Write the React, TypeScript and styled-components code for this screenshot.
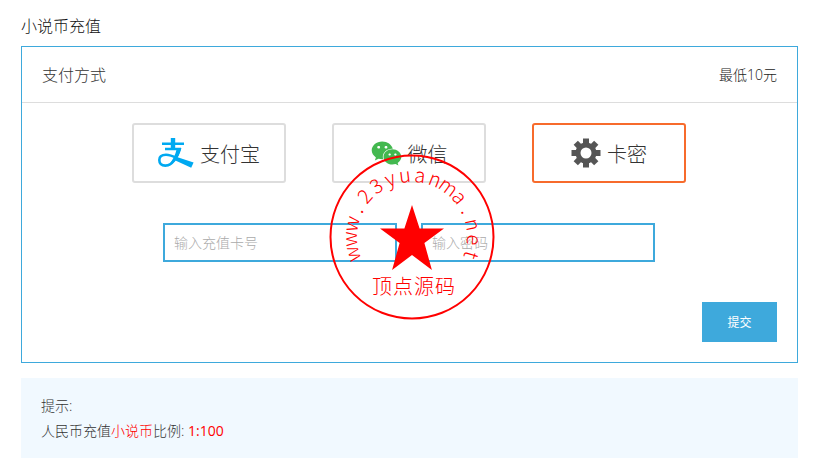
import React from "react";
import styled, { createGlobalStyle } from "styled-components";
import { FaWeixin } from "react-icons/fa";

const GlobalStyle = createGlobalStyle`
  *, *::before, *::after { box-sizing: border-box; }
  body {
    margin: 0;
    background: #fff;
    color: #555;
    font-family: "Open Sans", "Noto Sans CJK SC", sans-serif;
    font-size: 14px;
  }
  button, input { font-family: inherit; }
`;

const Page = styled.main`
  padding: 14px 29px 18px 21px;
`;

const Title = styled.h1`
  margin: 0 0 8px;
  color: #111;
  font-size: 16px;
  font-weight: 300;
  line-height: 24px;
`;

const Panel = styled.form`
  position: relative;
  border: 1px solid #3ea9dc;
`;

const PanelHeader = styled.header`
  display: flex;
  align-items: center;
  justify-content: space-between;
  height: 56px;
  padding: 0 20px;
  border-bottom: 1px solid #ddd;
  line-height: 24px;
`;

const PanelTitle = styled.h2`
  margin: 0;
  color: #333;
  font-size: 16px;
  font-weight: 300;
`;

const Minimum = styled.span`
  color: #222;
  font-weight: 300;
`;

const Methods = styled.div`
  display: flex;
  justify-content: center;
  gap: 46px;
  padding: 20px 21px 40px 20px;
`;

const Method = styled.button<{ $active?: boolean }>`
  display: flex;
  align-items: center;
  justify-content: center;
  gap: 6px;
  width: 154px;
  height: 60px;
  padding: 0;
  border: 2px solid ${(p) => (p.$active ? "#f76b2c" : "#ddd")};
  border-radius: 3px;
  background: #fff;
  color: #333;
  font-size: 20px;
  font-weight: 300;
  cursor: pointer;
`;

const Fields = styled.div`
  display: flex;
  justify-content: center;
  gap: 24px;
  padding: 0 21px 0 20px;
`;

const Field = styled.input`
  width: 234px;
  height: 39px;
  padding: 0 9px;
  border: 2px solid #3ea9dc;
  border-radius: 0;
  background: #fff;
  color: #555;
  font-size: 14px;
  font-weight: 300;
  &::placeholder { color: #aaa; opacity: 1; }
`;

const Actions = styled.div`
  display: flex;
  justify-content: flex-end;
  padding: 40px 20px 20px;
`;

const Submit = styled.button`
  width: 75px;
  height: 40px;
  padding: 0;
  border: 0;
  background: #3ea9dc;
  color: #fff;
  font-size: 12px;
  font-weight: 400;
  cursor: pointer;
`;

const Hint = styled.aside`
  margin-top: 15px;
  padding: 15px 20px;
  background: #f1f9ff;
  color: #333;
  font-weight: 300;
  line-height: 25px;
  p { margin: 0; }
  em { color: #f00; font-style: normal; }
`;

const Ratio = styled.em`
  font-weight: 400;
`;

const Stamp = styled.svg`
  position: absolute;
  top: 106px;
  left: 50%;
  margin-left: -82px;
  pointer-events: none;
  fill: #f00;
  font-family: "Liberation Sans Narrow", "Noto Sans CJK SC", sans-serif;
  font-weight: 300;
`;

const AlipayIcon = () => (
  <svg width="36" height="30" viewBox="0 0 36 30" fill="#00a9f1" aria-hidden="true">
    <path d="M12.8 0h4.4v12h-4.4zM4 4.4h22v2.6H4zM7 9.8h16v2.4H7z" />
    <path
      d="M21.3 11C19.5 19.5 14 27.6 7.4 27.6C3.2 27.6 1.3 25.2 1.3 22C1.3 18.6 4 16.8 8 16.8C12 16.8 15 18.2 19 20.2"
      fill="none"
      stroke="#00a9f1"
      strokeWidth="2.6"
    />
    <path d="M18.8 10H23.4C22.6 14 21.2 17 19.6 19.2L35.6 24.6L33.2 29.8L17.4 22.6C15.4 25 12.8 27.4 9.4 28.8C13.6 24 17.8 17 18.8 10Z" />
  </svg>
);

const GearIcon = () => (
  <svg width="30" height="30" viewBox="0 0 30 30" aria-hidden="true">
    <circle cx="15" cy="15" r="8" fill="none" stroke="#555" strokeWidth="5" />
    {[0, 45, 90, 135, 180, 225, 270, 315].map((angle) => (
      <path key={angle} d="M12 0.5h6v5h-6z" fill="#555" transform={`rotate(${angle} 15 15)`} />
    ))}
  </svg>
);

const SITE = "www.23yuanma.net";

const SourceStamp = () => (
  <Stamp width="168" height="168" viewBox="-84 -84 168 168" role="img" aria-label="www.23yuanma.net 顶点源码">
    <circle r="81.5" fill="none" stroke="#f00" strokeWidth="2" />
    <path d="M0 -32L7.6 -8.5H32L12.4 6L19.9 33L0 18L-19.9 33L-12.4 6L-32 -8.5H-7.6Z" />
    {SITE.split("").map((letter, i) => (
      <text key={i} y="-55" fontSize="20" textAnchor="middle" transform={`rotate(${-106 + i * 14.2})`}>
        {letter}
      </text>
    ))}
    {"顶点源码".split("").map((letter, i) => (
      <text key={letter} x={-30 + i * 21} y="57" fontSize="20" textAnchor="middle">
        {letter}
      </text>
    ))}
  </Stamp>
);

export default function App() {
  return (
    <>
      <GlobalStyle />
      <Page>
        <Title>小说币充值</Title>
        <Panel onSubmit={(e) => e.preventDefault()}>
          <PanelHeader>
            <PanelTitle>支付方式</PanelTitle>
            <Minimum>最低10元</Minimum>
          </PanelHeader>
          <Methods>
            <Method type="button">
              <AlipayIcon />
              支付宝
            </Method>
            <Method type="button">
              <FaWeixin size={31} color="#43b84f" />
              微信
            </Method>
            <Method type="button" $active aria-pressed="true">
              <GearIcon />
              卡密
            </Method>
          </Methods>
          <Fields>
            <Field type="text" aria-label="充值卡号" placeholder="输入充值卡号" />
            <Field type="password" aria-label="密码" placeholder="输入密码" />
          </Fields>
          <Actions>
            <Submit type="submit">提交</Submit>
          </Actions>
          <SourceStamp />
        </Panel>
        <Hint>
          <p>提示:</p>
          <p>
            人民币充值<em>小说币</em>比例: <Ratio>1:100</Ratio>
          </p>
        </Hint>
      </Page>
    </>
  );
}
